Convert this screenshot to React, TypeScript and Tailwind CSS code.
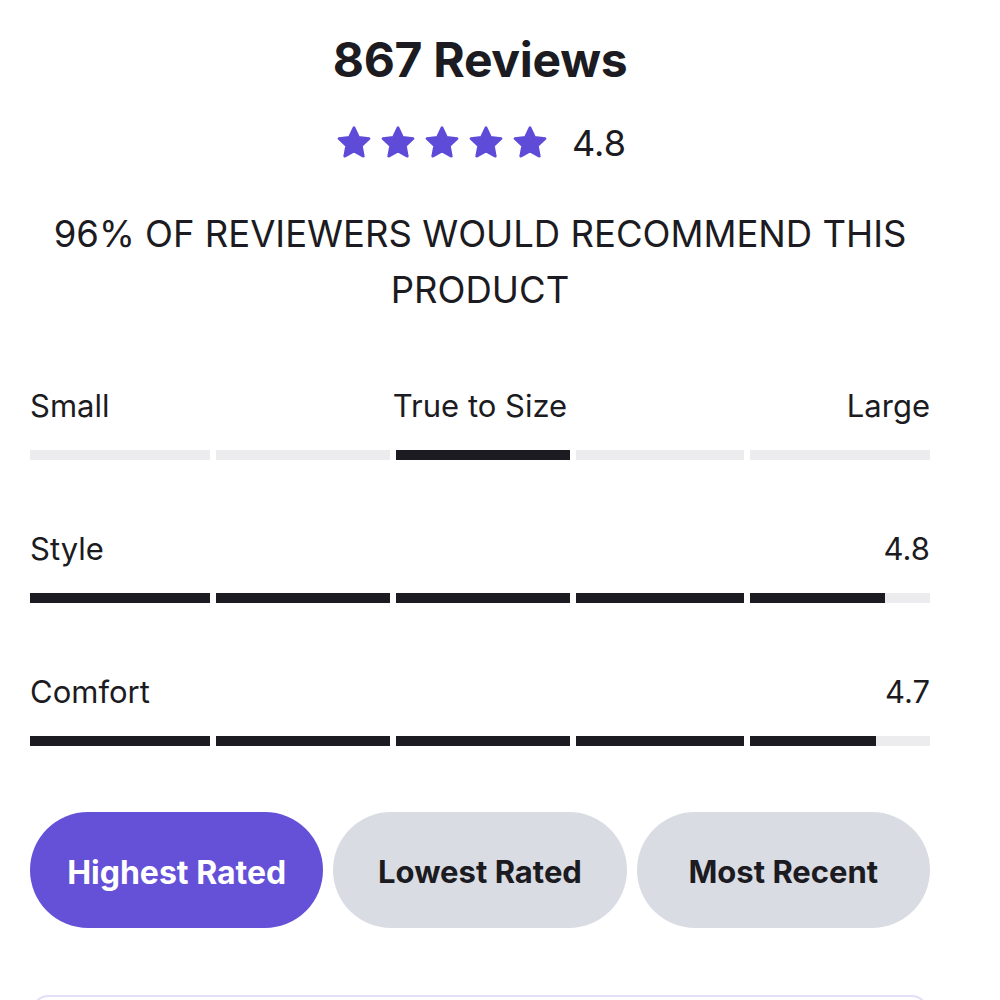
// segment widths of the five-part meters
const segWidths = ['w-[180px]', 'w-[174px]', 'w-[174px]', 'w-[168px]', 'w-[180px]'];

interface RatingRow {
  label: string;
  value: string;
  fills: number[];
}

const ratings: RatingRow[] = [
  { label: 'Style', value: '4.8', fills: [1, 1, 1, 1, 0.75] },
  { label: 'Comfort', value: '4.7', fills: [1, 1, 1, 1, 0.7] },
];

function Star() {
  return (
    <svg viewBox="0 0 24 24" className="w-[40px] h-[40px]">
      <path
        d="M12 2.8l2.75 5.75 6.3.78-4.62 4.36 1.18 6.24L12 16.9l-5.61 3.03 1.18-6.24-4.62-4.36 6.3-.78z"
        fill="#5e4bd8"
        stroke="#5e4bd8"
        strokeWidth="1.6"
        strokeLinejoin="round"
      />
    </svg>
  );
}

function Meter({ fills }: { fills: number[] }) {
  return (
    <div className="mt-[24px] flex gap-[6px]">
      {fills.map((f, i) => (
        <div key={i} className={`${segWidths[i]} h-[10px] bg-[#ececef]`}>
          <div className="h-full bg-[#1b1b21]" style={{ width: `${f * 100}%` }} />
        </div>
      ))}
    </div>
  );
}

export default function App() {
  return (
    <div
      className="w-[1000px] h-[1000px] bg-white overflow-hidden text-[#1b1b21]"
      style={{ fontFamily: 'Inter, "Liberation Sans", sans-serif' }}
    >
      <div className="w-[900px] ml-[30px] pt-[30px] flex flex-col">
        <h1 className="text-center text-[48px] font-bold leading-[60px] tracking-[-0.3px]">
          867 Reviews
        </h1>

        <div className="mt-[33px] flex items-center justify-center gap-[22px]">
          <div className="flex gap-[4px]">
            {[0, 1, 2, 3, 4].map((i) => (
              <Star key={i} />
            ))}
          </div>
          <span className="text-[36px] leading-[40px]">4.8</span>
        </div>

        <p className="mt-[43px] text-center text-[36.5px] leading-[56px]">
          96% OF REVIEWERS WOULD RECOMMEND THIS PRODUCT
        </p>

        {/* Fit */}
        <div className="mt-[68px]">
          <div className="grid grid-cols-3 text-[31px] leading-[40px]">
            <span>Small</span>
            <span className="text-center">True to Size</span>
            <span className="text-right">Large</span>
          </div>
          <Meter fills={[0, 0, 1, 0, 0]} />
        </div>

        {ratings.map((r) => (
          <div key={r.label} className="mt-[69px]">
            <div className="flex justify-between text-[31px] leading-[40px]">
              <span>{r.label}</span>
              <span>{r.value}</span>
            </div>
            <Meter fills={r.fills} />
          </div>
        ))}

        {/* Sort */}
        <div className="mt-[66px] flex gap-[10px]">
          <button className="flex-1 h-[116px] pt-[5px] rounded-full bg-[#6550d8] text-white text-[32px] font-bold">
            Highest Rated
          </button>
          <button className="flex-1 h-[116px] pt-[5px] rounded-full bg-[#d9dce3] text-[31px] font-bold">
            Lowest Rated
          </button>
          <button className="flex-1 h-[116px] pt-[5px] rounded-full bg-[#d9dce3] text-[31px] font-bold">
            Most Recent
          </button>
        </div>

        <div className="mt-[67px] mx-[2px] h-[80px] rounded-[16px] border-2 border-[#e4def6]" />
      </div>
    </div>
  );
}
